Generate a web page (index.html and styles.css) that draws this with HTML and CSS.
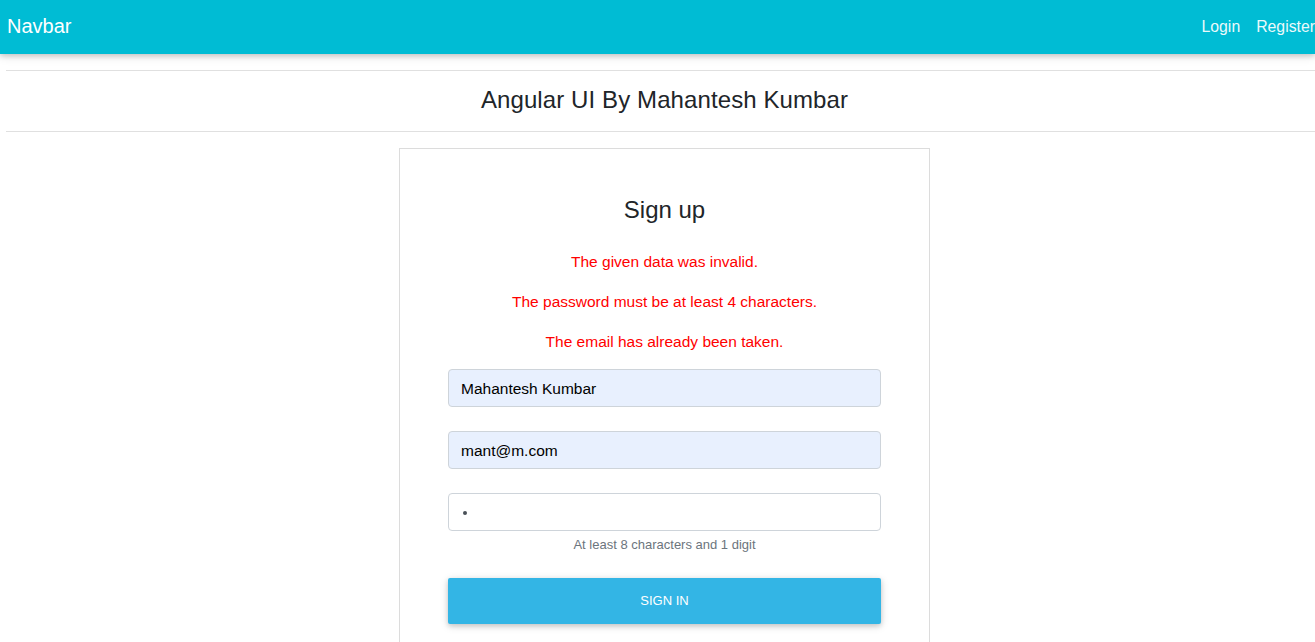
FILE: index.html
```html
<!DOCTYPE html>
<html>
<head>
<meta charset="utf-8">
<link rel="stylesheet" href="styles.css">
</head>
<body>
<nav class="navbar">
  <a class="brand" href="#">Navbar</a>
  <div class="links">
    <a href="#">Login</a>
    <a href="#">Register</a>
  </div>
</nav>
<main class="main">
  <hr class="rule">
  <h1 class="title">Angular UI By Mahantesh Kumbar</h1>
  <hr class="rule">
  <div class="card">
    <h2 class="card-title">Sign up</h2>
    <p class="err">The given data was invalid.</p>
    <p class="err">The password must be at least 4 characters.</p>
    <p class="err">The email has already been taken.</p>
    <div class="field"><div class="input filled">Mahantesh Kumbar</div></div>
    <div class="field"><div class="input filled">mant@m.com</div></div>
    <div class="field"><div class="input"><span class="dot"></span></div>
      <div class="hint">At least 8 characters and 1 digit</div>
    </div>
    <button class="btn">SIGN IN</button>
  </div>
</main>
</body>
</html>
```
FILE: styles.css
```css
html, body { margin: 0; padding: 0; overflow: hidden; }
body {
  font-family: "Liberation Sans", Arial, sans-serif;
  color: #212529;
  background: #fff;
  width: 1315px;
  height: 642px;
}
.navbar {
  height: 54px;
  background: #00bcd4;
  display: flex;
  align-items: center;
  justify-content: space-between;
  padding-left: 7px;
  box-shadow: 0 2px 5px rgba(0,0,0,.16), 0 2px 10px rgba(0,0,0,.12);
  position: relative;
  z-index: 2;
}
.brand {
  color: #fff;
  text-decoration: none;
  font-size: 20px;
  margin-top: -2px;
}
.links {
  display: flex;
  gap: 16px;
  margin-right: 0;
  margin-top: 0;
}
.links a {
  color: #fff;
  text-decoration: none;
  font-size: 15.8px;
  opacity: .92;
}
.main {
  margin-left: 6px;
  width: 1317px;
  display: flex;
  flex-direction: column;
  align-items: center;
}
.rule {
  align-self: stretch;
  border: 0;
  border-top: 1px solid #e0e0e0;
  margin: 0;
}
.main > .rule:first-child { margin-top: 16px; }
.title {
  font-size: 24px;
  font-weight: 400;
  line-height: 29px;
  margin: 0;
  padding: 14px 0 17px;
  letter-spacing: 0.1px;
}
.card {
  margin-top: 16px;
  width: 433px;
  padding: 47px 48px 40px;
  border: 1px solid #dcdcdc;
  display: flex;
  flex-direction: column;
}
.card-title {
  font-size: 24px;
  font-weight: 400;
  line-height: 28px;
  margin: 0 0 26px;
  text-align: center;
}
.err {
  color: #ff0000;
  font-size: 15.5px;
  line-height: 24px;
  margin: 0 0 16px;
  text-align: center;
}
.err:last-of-type { margin-bottom: 15px; }
.field { margin-bottom: 24px; }
.input {
  height: 36px;
  border: 1px solid #ced4da;
  border-radius: 4px;
  background: #fff;
  padding: 0 12px;
  display: flex;
  align-items: center;
  font-size: 15.5px;
  color: #000;
  padding-top: 1px;
  box-sizing: content-box;
  height: 35px;
}
.input.filled { background: #e8f0fe; }
.dot {
  width: 4px;
  height: 4px;
  border-radius: 50%;
  background: #495057;
  margin-left: 2px;
}
.hint {
  text-align: center;
  font-size: 13px;
  color: #6c757d;
  margin-top: 5px;
  line-height: 17px;
}
.field:last-of-type { margin-bottom: 25px; }
.btn {
  height: 46px;
  border: 0;
  border-radius: 2px;
  background: #33b5e5;
  color: #fff;
  font-family: "Liberation Sans", Arial, sans-serif;
  font-size: 13px;
  padding-bottom: 2px;
  box-shadow: 0 2px 5px rgba(0,0,0,.16), 0 2px 10px rgba(0,0,0,.12);
}
```
